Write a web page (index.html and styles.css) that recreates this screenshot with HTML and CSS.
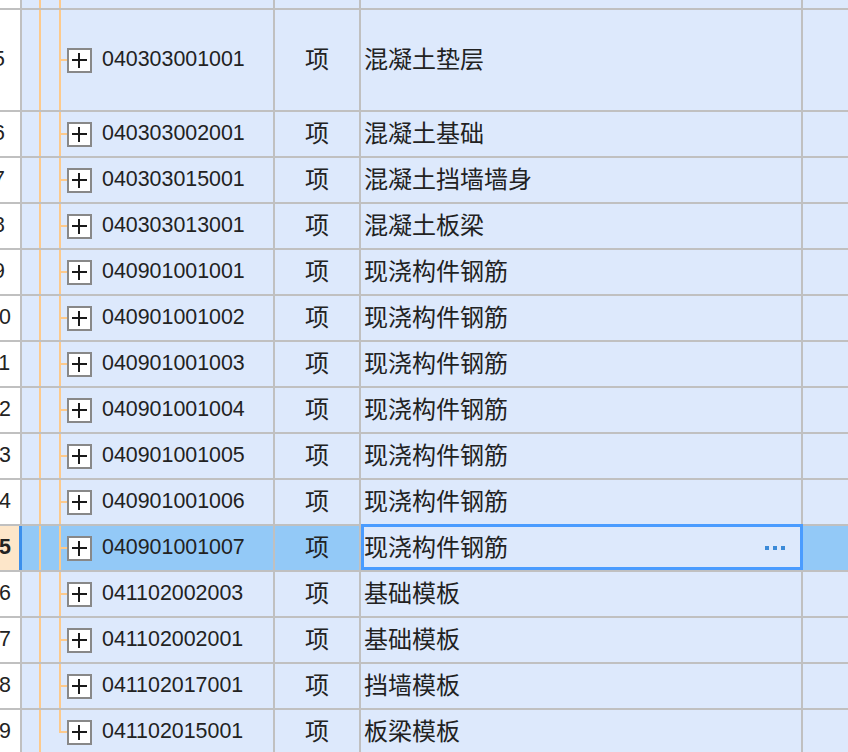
FILE: index.html
```html
<!DOCTYPE html>
<html lang="zh">
<head>
<meta charset="utf-8">
<title>清单</title>
<link rel="stylesheet" href="styles.css">
</head>
<body>
<div class="grid">
  <div class="row top">
    <div class="num"></div>
    <div class="code"><i class="pipe"></i><i class="branch"></i></div>
    <div class="unit"></div>
    <div class="name"></div>
    <div class="extra"></div>
  </div>
  <div class="row tall">
    <div class="num"><span>5</span></div>
    <div class="code"><i class="pipe"></i><i class="branch"></i><b class="box"><svg width="21" height="21" viewBox="0 0 21 21"><path d="M3 10H18M10 3V18" stroke="#1a1a1a" stroke-width="2"/></svg></b><span class="txt">040303001001</span></div>
    <div class="unit"><span class="txt">项</span></div>
    <div class="name"><span class="txt">混凝土垫层</span></div>
    <div class="extra"></div>
  </div>
  <div class="row">
    <div class="num"><span>6</span></div>
    <div class="code"><i class="pipe"></i><i class="branch"></i><b class="box"><svg width="21" height="21" viewBox="0 0 21 21"><path d="M3 10H18M10 3V18" stroke="#1a1a1a" stroke-width="2"/></svg></b><span class="txt">040303002001</span></div>
    <div class="unit"><span class="txt">项</span></div>
    <div class="name"><span class="txt">混凝土基础</span></div>
    <div class="extra"></div>
  </div>
  <div class="row">
    <div class="num"><span>7</span></div>
    <div class="code"><i class="pipe"></i><i class="branch"></i><b class="box"><svg width="21" height="21" viewBox="0 0 21 21"><path d="M3 10H18M10 3V18" stroke="#1a1a1a" stroke-width="2"/></svg></b><span class="txt">040303015001</span></div>
    <div class="unit"><span class="txt">项</span></div>
    <div class="name"><span class="txt">混凝土挡墙墙身</span></div>
    <div class="extra"></div>
  </div>
  <div class="row">
    <div class="num"><span>8</span></div>
    <div class="code"><i class="pipe"></i><i class="branch"></i><b class="box"><svg width="21" height="21" viewBox="0 0 21 21"><path d="M3 10H18M10 3V18" stroke="#1a1a1a" stroke-width="2"/></svg></b><span class="txt">040303013001</span></div>
    <div class="unit"><span class="txt">项</span></div>
    <div class="name"><span class="txt">混凝土板梁</span></div>
    <div class="extra"></div>
  </div>
  <div class="row">
    <div class="num"><span>9</span></div>
    <div class="code"><i class="pipe"></i><i class="branch"></i><b class="box"><svg width="21" height="21" viewBox="0 0 21 21"><path d="M3 10H18M10 3V18" stroke="#1a1a1a" stroke-width="2"/></svg></b><span class="txt">040901001001</span></div>
    <div class="unit"><span class="txt">项</span></div>
    <div class="name"><span class="txt">现浇构件钢筋</span></div>
    <div class="extra"></div>
  </div>
  <div class="row">
    <div class="num"><span>10</span></div>
    <div class="code"><i class="pipe"></i><i class="branch"></i><b class="box"><svg width="21" height="21" viewBox="0 0 21 21"><path d="M3 10H18M10 3V18" stroke="#1a1a1a" stroke-width="2"/></svg></b><span class="txt">040901001002</span></div>
    <div class="unit"><span class="txt">项</span></div>
    <div class="name"><span class="txt">现浇构件钢筋</span></div>
    <div class="extra"></div>
  </div>
  <div class="row">
    <div class="num"><span>11</span></div>
    <div class="code"><i class="pipe"></i><i class="branch"></i><b class="box"><svg width="21" height="21" viewBox="0 0 21 21"><path d="M3 10H18M10 3V18" stroke="#1a1a1a" stroke-width="2"/></svg></b><span class="txt">040901001003</span></div>
    <div class="unit"><span class="txt">项</span></div>
    <div class="name"><span class="txt">现浇构件钢筋</span></div>
    <div class="extra"></div>
  </div>
  <div class="row">
    <div class="num"><span>12</span></div>
    <div class="code"><i class="pipe"></i><i class="branch"></i><b class="box"><svg width="21" height="21" viewBox="0 0 21 21"><path d="M3 10H18M10 3V18" stroke="#1a1a1a" stroke-width="2"/></svg></b><span class="txt">040901001004</span></div>
    <div class="unit"><span class="txt">项</span></div>
    <div class="name"><span class="txt">现浇构件钢筋</span></div>
    <div class="extra"></div>
  </div>
  <div class="row">
    <div class="num"><span>13</span></div>
    <div class="code"><i class="pipe"></i><i class="branch"></i><b class="box"><svg width="21" height="21" viewBox="0 0 21 21"><path d="M3 10H18M10 3V18" stroke="#1a1a1a" stroke-width="2"/></svg></b><span class="txt">040901001005</span></div>
    <div class="unit"><span class="txt">项</span></div>
    <div class="name"><span class="txt">现浇构件钢筋</span></div>
    <div class="extra"></div>
  </div>
  <div class="row">
    <div class="num"><span>14</span></div>
    <div class="code"><i class="pipe"></i><i class="branch"></i><b class="box"><svg width="21" height="21" viewBox="0 0 21 21"><path d="M3 10H18M10 3V18" stroke="#1a1a1a" stroke-width="2"/></svg></b><span class="txt">040901001006</span></div>
    <div class="unit"><span class="txt">项</span></div>
    <div class="name"><span class="txt">现浇构件钢筋</span></div>
    <div class="extra"></div>
  </div>
  <div class="row sel">
    <div class="num"><span>15</span></div>
    <div class="code"><i class="pipe"></i><i class="branch"></i><b class="box"><svg width="21" height="21" viewBox="0 0 21 21"><path d="M3 10H18M10 3V18" stroke="#1a1a1a" stroke-width="2"/></svg></b><span class="txt">040901001007</span></div>
    <div class="unit"><span class="txt">项</span></div>
    <div class="name active"><span class="txt">现浇构件钢筋</span><span class="dots"><i></i><i></i><i></i></span></div>
    <div class="extra"></div>
  </div>
  <div class="row">
    <div class="num"><span>16</span></div>
    <div class="code"><i class="pipe"></i><i class="branch"></i><b class="box"><svg width="21" height="21" viewBox="0 0 21 21"><path d="M3 10H18M10 3V18" stroke="#1a1a1a" stroke-width="2"/></svg></b><span class="txt">041102002003</span></div>
    <div class="unit"><span class="txt">项</span></div>
    <div class="name"><span class="txt">基础模板</span></div>
    <div class="extra"></div>
  </div>
  <div class="row">
    <div class="num"><span>17</span></div>
    <div class="code"><i class="pipe"></i><i class="branch"></i><b class="box"><svg width="21" height="21" viewBox="0 0 21 21"><path d="M3 10H18M10 3V18" stroke="#1a1a1a" stroke-width="2"/></svg></b><span class="txt">041102002001</span></div>
    <div class="unit"><span class="txt">项</span></div>
    <div class="name"><span class="txt">基础模板</span></div>
    <div class="extra"></div>
  </div>
  <div class="row">
    <div class="num"><span>18</span></div>
    <div class="code"><i class="pipe"></i><i class="branch"></i><b class="box"><svg width="21" height="21" viewBox="0 0 21 21"><path d="M3 10H18M10 3V18" stroke="#1a1a1a" stroke-width="2"/></svg></b><span class="txt">041102017001</span></div>
    <div class="unit"><span class="txt">项</span></div>
    <div class="name"><span class="txt">挡墙模板</span></div>
    <div class="extra"></div>
  </div>
  <div class="row last">
    <div class="num"><span>19</span></div>
    <div class="code"><i class="pipe"></i><i class="branch"></i><b class="box"><svg width="21" height="21" viewBox="0 0 21 21"><path d="M3 10H18M10 3V18" stroke="#1a1a1a" stroke-width="2"/></svg></b><span class="txt">041102015001</span></div>
    <div class="unit"><span class="txt">项</span></div>
    <div class="name"><span class="txt">板梁模板</span></div>
    <div class="extra"></div>
  </div>
</div>
</body>
</html>
```
FILE: styles.css
```css
html, body {
  margin: 0;
  padding: 0;
  background: #dde9fc;
  overflow: hidden;
}
body {
  font-family: "Liberation Sans", "Noto Sans CJK SC", sans-serif;
  color: #222;
}
.grid {
  width: 848px;
}
.row {
  display: flex;
  height: 44px;
  border-bottom: 2px solid #c0c0c0;
  background: #dde9fc;
}
.row.top {
  height: 8px;
}
.row.tall {
  height: 100px;
}
.num {
  flex: none;
  width: 20px;
  background: #fff;
  border-right: 2px solid #c0c0c0;
  overflow: hidden;
  display: flex;
  align-items: center;
  font-size: 21.4px;
}
.num span {
  flex: none;
  width: 40px;
  margin-left: -21px;
  text-align: center;
  padding-bottom: 2px;
}
.sel .num {
  width: 19px;
  background: #fde6c9;
  border-right: 3px solid #3b8fec;
  font-weight: bold;
}
.code {
  flex: none;
  width: 251px;
  border-right: 2px solid #c0c0c0;
  display: flex;
  align-items: center;
  font-size: 21.4px;
}
.pipe {
  flex: none;
  align-self: stretch;
  width: 2px;
  margin-left: 17px;
  background: #fdca8c;
}
.branch {
  flex: none;
  align-self: stretch;
  width: 8px;
  margin-left: 18px;
  background:
    linear-gradient(#fdca8c, #fdca8c) left top / 2px 100% no-repeat,
    linear-gradient(#fdca8c, #fdca8c) left center / 8px 2px no-repeat;
}
.top .branch {
  background: linear-gradient(#fdca8c, #fdca8c) left top / 2px 100% no-repeat;
}
.last .branch {
  background:
    linear-gradient(#fdca8c, #fdca8c) left top / 2px calc(50% + 1px) no-repeat,
    linear-gradient(#fdca8c, #fdca8c) left center / 8px 2px no-repeat;
}
.box {
  flex: none;
  width: 21px;
  height: 21px;
  border: 2px solid #888;
  background: #fff;
}
.box svg {
  display: block;
}
.code .txt {
  margin-left: 10px;
}
.txt {
  padding-bottom: 2px;
  white-space: nowrap;
}
.unit {
  flex: none;
  width: 84px;
  border-right: 2px solid #c0c0c0;
  display: flex;
  align-items: center;
  justify-content: center;
  font-size: 24px;
}
.name {
  flex: none;
  width: 437px;
  padding-left: 3px;
  border-right: 2px solid #c0c0c0;
  display: flex;
  align-items: center;
  font-size: 24px;
  position: relative;
}
.unit .txt,
.name .txt {
  padding-bottom: 6px;
}
.extra {
  flex: 1;
}
.sel .code,
.sel .unit,
.sel .extra {
  background: #93c9f7;
}
.name.active::after {
  content: "";
  position: absolute;
  top: -2px;
  left: 0;
  right: -2px;
  bottom: 0;
  border: 3px solid #4a9cff;
  pointer-events: none;
}
.dots {
  margin-left: auto;
  margin-right: 16px;
  display: flex;
  gap: 4px;
}
.dots i {
  width: 4px;
  height: 4px;
  background: #3b8ad8;
}
```
